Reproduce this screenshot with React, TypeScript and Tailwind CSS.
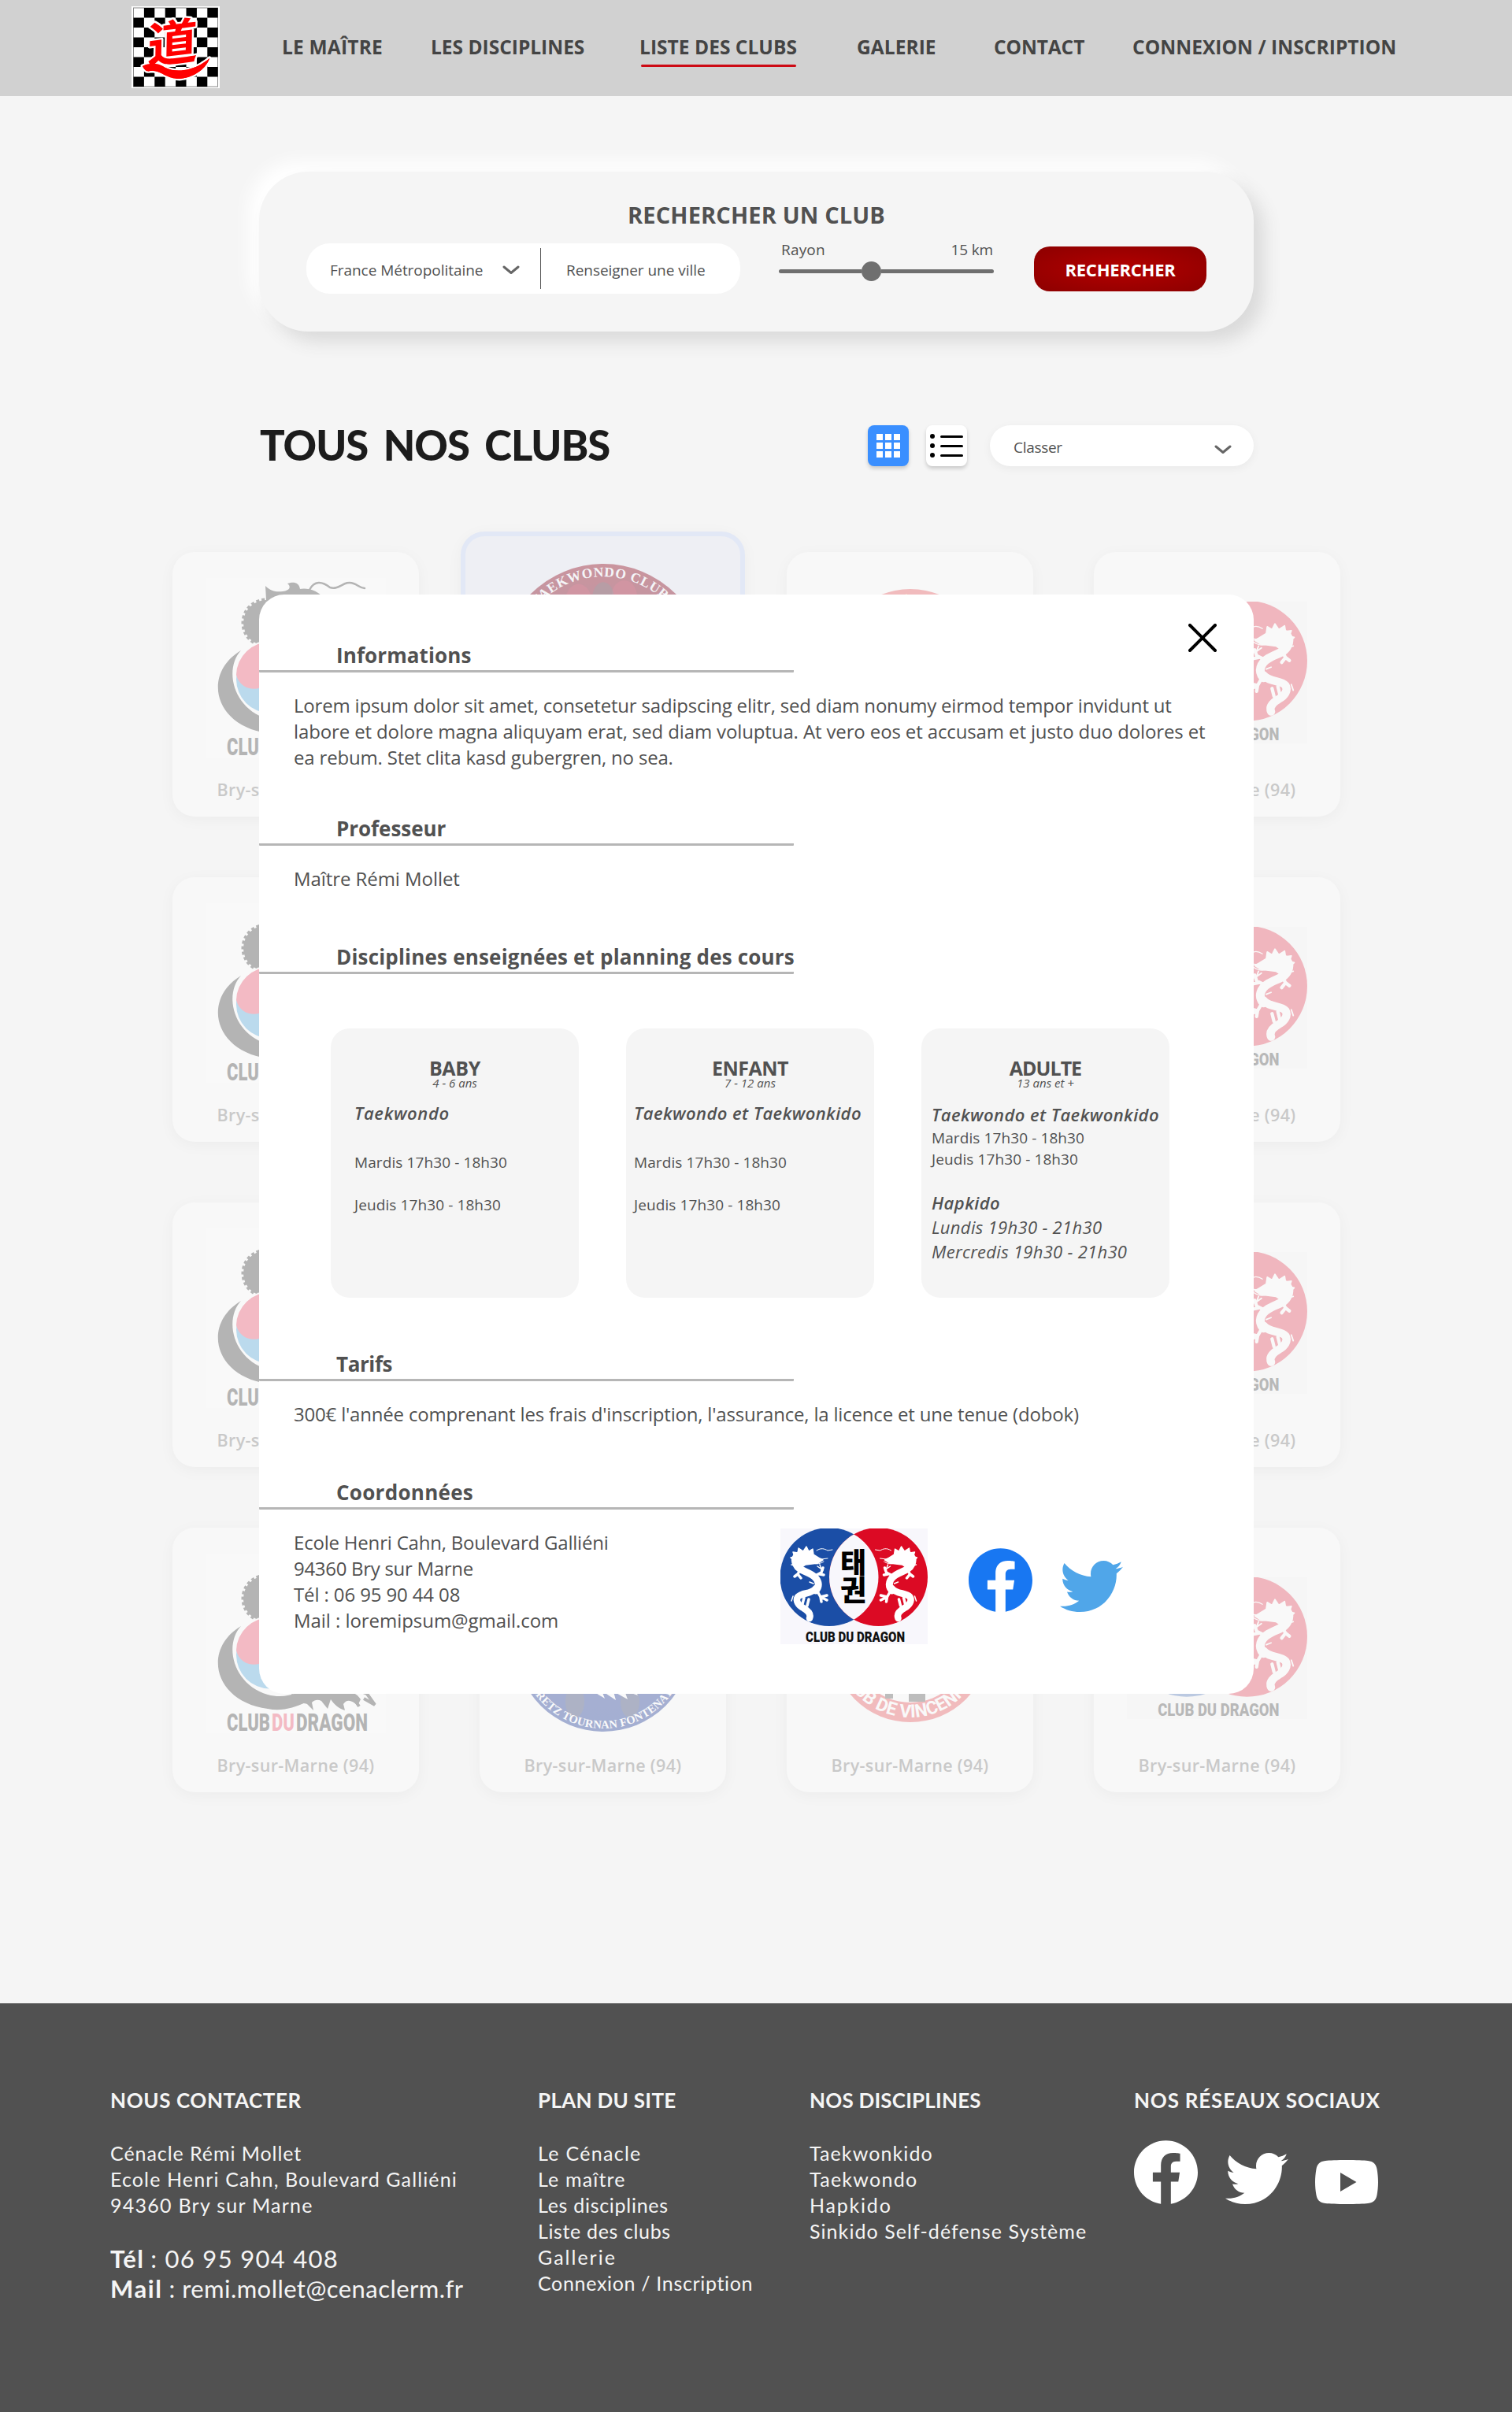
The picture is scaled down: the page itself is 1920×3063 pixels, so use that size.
import React from "react";

/* ---------- Icons ---------- */

const FacebookIcon = ({ className }: { className: string }) => (
  <svg viewBox="8 8 496 493" className={className} fill="currentColor">
    <path d="M504 256C504 119 393 8 256 8S8 119 8 256c0 123.78 90.69 226.38 209.25 245V327.69h-63V256h63v-54.64c0-62.15 37-96.48 93.67-96.48 27.14 0 55.52 4.84 55.52 4.84v61h-31.28c-30.8 0-40.41 19.12-40.41 38.73V256h68.78l-11 71.69h-57.78V501C413.31 478.38 504 379.78 504 256z" />
  </svg>
);

const TwitterIcon = ({ className }: { className: string }) => (
  <svg viewBox="0 48 512 416" className={className} fill="currentColor">
    <path d="M459.37 151.716c.325 4.548.325 9.097.325 13.645 0 138.72-105.583 298.558-298.558 298.558-59.452 0-114.68-17.219-161.137-47.106 8.447.974 16.568 1.299 25.34 1.299 49.055 0 94.213-16.568 130.274-44.832-46.132-.975-84.792-31.188-98.112-72.772 6.498.974 12.995 1.624 19.818 1.624 9.421 0 18.843-1.3 27.614-3.573-48.081-9.747-84.143-51.98-84.143-102.985v-1.299c13.969 7.797 30.214 12.67 47.431 13.319-28.264-18.843-46.781-51.005-46.781-87.391 0-19.492 5.197-37.36 14.294-52.954 51.655 63.675 129.3 105.258 216.365 109.807-1.624-7.797-2.599-15.918-2.599-24.04 0-57.828 46.782-104.934 104.934-104.934 30.213 0 57.502 12.67 76.67 33.137 23.715-4.548 46.456-13.32 66.599-25.34-7.798 24.366-24.366 44.833-46.132 57.827 21.117-2.273 41.584-8.122 60.426-16.243-14.292 20.791-32.161 39.308-52.628 54.253z" />
  </svg>
);

const YoutubeIcon = ({ className }: { className: string }) => (
  <svg viewBox="0 0 80 56" className={className} fill="currentColor">
    <path
      fillRule="evenodd"
      d="M40 0C52 0 62 .4 67 1 74 1.8 77.500 5 78.600 12 79.400 17 80 22 80 28s-.6 11-1.400 16C77.500 51 74 54.200 67 55c-5 .6-15 1-27 1s-22-.4-27-1C6 54.200 2.500 51 1.400 44 .6 39 0 34 0 28s.6-11 1.400-16C2.500 5 6 1.800 13 1 18 .4 28 0 40 0ZM32 16v24l20.500-12Z"
    />
  </svg>
);

const Chevron = () => (
  <svg viewBox="0 0 22 12" className="h-3 w-[22px]" fill="none" stroke="#666" strokeWidth="3" strokeLinecap="round" strokeLinejoin="round">
    <path d="M2 2l9 7.500L20 2" />
  </svg>
);

/* ---------- Logos ---------- */

const cells = Array.from({ length: 64 }, (_, i) => i).filter((i) => ((i % 8) + Math.floor(i / 8)) % 2 === 1);

const SiteLogo = () => (
  <svg viewBox="0 0 112 104" className="h-[104px] w-28">
    <rect width="112" height="104" fill="#fff" />
    <rect x="2" y="1.500" width="108" height="101" fill="#8a8a8a" />
    <rect x="3" y="2.500" width="106" height="99" fill="#fff" />
    {cells.map((i) => (
      <rect key={i} x={2.500 + (i % 8) * 13.400} y={2 + Math.floor(i / 8) * 12.500} width="13.400" height="12.500" />
    ))}
    <g stroke="#fff" strokeWidth="5" strokeLinejoin="round" paintOrder="stroke" fill="red">
      <path d="M14 76c10-5 20-4 29 2 14 7 38 4 56-12-4 13-20 25-38 26-16 0-22-9-33-10-5-1-9 4-14-6Z" />
      <text
        x="0"
        y="0"
        transform="translate(20 73) rotate(-7) skewX(-8) scale(1 .96)"
        fontFamily="'Noto Sans CJK JP', sans-serif"
        fontWeight="700"
        fontSize="64"
      >
        道
      </text>
    </g>
    <path d="M14 76c10-5 20-4 29 2 14 7 38 4 56-12-4 13-20 25-38 26-16 0-22-9-33-10-5-1-9 4-14-6Z" fill="red" />
  </svg>
);

const DragonShape = () => (
  <g fill="none" stroke="#fff" strokeLinecap="round" strokeLinejoin="round">
    <path strokeWidth="9" d="M30 34C20 32 16 38 20 46c3 7 12 8 20 13 8 5 11 13 5 20" />
    <path strokeWidth="8.500" d="M45 76c-6 8-18 5-23 11-3 5 1 11 7 14 7 4 10 8 8 13" />
    <path strokeWidth="4.500" d="M22 87c-3 8 6 14 12 18" />
    <path fill="#fff" strokeWidth="1.400" d="M16 40l-3-3 5-1-2-6 6 1 1-6 6 4 4-6 3 6 5-3 1 7 8 5 4 2-6 4-8 1-8 1-6 4-6 1Z" />
    <path strokeWidth="1" d="M46 28c6-4 10-2 14 0l6-1M44 40l16-2M40 43c6 4 12 1 15-1" />
    <path strokeWidth="3.500" d="M44 60l8-4 2-6M50 58l5 1M47 80l4 7 8-2M51 87l1 6M51 87l8 4M27 49l-5 9 4 5M22 58l-4 3M30 88l-2 8M36 90l-2 8" />
    <path strokeWidth="1.500" d="M16 86l-2 6M42 70l-5-2M14 46l4 1M47 48l7 5M50 46l3 8" />
  </g>
);

/* Two interlocked discs holding facing dragons, with the club name below */
const ClubDragonLogo = ({ className, id, backdrop }: { className: string; id: string; backdrop: string }) => (
  <svg viewBox="0 0 187 147" className={className}>
    <defs>
      <clipPath id={id}>
        <circle cx="62" cy="61.500" r="62.500" />
      </clipPath>
    </defs>
    <rect width="187" height="147" fill={backdrop} />
    <circle cx="62" cy="61.500" r="62.500" fill="#1b4ea6" />
    <circle cx="124.500" cy="61.500" r="62.500" fill="#dc0a24" />
    <circle cx="124.500" cy="61.500" r="62.500" fill="#f8f7fc" clipPath={`url(#${id})`} />
    <DragonShape />
    <g transform="translate(186.500 0) scale(-1 1)">
      <DragonShape />
    </g>
    <g fontFamily="'Noto Sans CJK KR', sans-serif" fontWeight="900" fontSize="36" textAnchor="middle">
      <text x="92.500" y="57">태</text>
      <text x="92.500" y="92">권</text>
    </g>
    <text
      x="32"
      y="143.500"
      fontFamily="Roboto, sans-serif"
      fontWeight="900"
      fontSize="18.500"
      textLength="126"
      lengthAdjust="spacingAndGlyphs"
      fill="#111"
    >
      CLUB DU DRAGON
    </text>
  </svg>
);

/* Dragon head over a taegeuk wrapped by a black crescent */
const ClubDuDragonLogo = () => (
  <svg viewBox="0 0 228 228" className="h-[228px] w-[228px] opacity-[0.27]">
    <rect width="228" height="228" fill="#fff" />
    <path d="M75 10l1 18 14 2 50-8c-6-6-12-8-21-8-1-7-6-9-12-8l-4 1c5 4 3 9-6 10-8 1-15 0-22-7Z" />
    <path d="M118 14c12-2 22 2 30 10l-40 8Z" />
    <path d="M131 15c6-12 16-11 26-3 12 4 18-10 30-5 6 2 8 6 14 6" fill="none" stroke="#000" strokeWidth="2.500" strokeLinecap="round" />
    <circle cx="76" cy="57" r="29" />
    <circle cx="76" cy="57" r="29.500" fill="none" stroke="#000" strokeWidth="4" strokeDasharray="4 3" />
    <circle cx="81" cy="128.500" r="49" fill="#fff" />
    <circle cx="81" cy="128.500" r="43" fill="#1b8bd0" />
    <path d="M38 123a43 43 0 0 1 86 2c-10-8-32-8-42 2-6 18-38 20-44-4Z" fill="#e8183c" />
    <path d="M44 92c-22 24-10 74 34 87 22 6 42-2 56-14 10 6 24 4 34-4l-6 14c14-4 28 0 34 10l-4 8c-8-8-14-8-18-2l2 8c-8-2-14-8-18-14l-4 12-8-10c-4-2-8-2-12 2l2 10-10-10c-14 6-30 12-48 8C10 188-6 122 44 92Z" />
    <path d="M108 180l16 3-6 4 12 2M168 178l14-2 12 18M184 170l20 8 10 14-14-8" fill="none" stroke="#000" strokeWidth="4" />
    <g fontFamily="Roboto, sans-serif" fontWeight="900" fontSize="31">
      <text x="26" y="225" textLength="55" lengthAdjust="spacingAndGlyphs">CLUB</text>
      <text x="83" y="225" textLength="29" lengthAdjust="spacingAndGlyphs" fill="#e8183c">DU</text>
      <text x="114" y="225" textLength="91" lengthAdjust="spacingAndGlyphs">DRAGON</text>
    </g>
  </svg>
);

/* Round red and blue badge with lettering on the rim */
const TournanLogo = ({ id, className }: { id: string; className: string }) => (
  <svg viewBox="0 0 224 224" className={className}>
    <defs>
      <linearGradient id={`${id}-fill`} x1="0" y1="0" x2="0" y2="1">
        <stop offset="0" stopColor="#961020" />
        <stop offset=".45" stopColor="#701030" />
        <stop offset=".55" stopColor="#102a90" />
        <stop offset="1" stopColor="#0a2a8c" />
      </linearGradient>
      <path id={`${id}-top`} d="M14 112a98 98 0 0 1 196 0" />
      <path id={`${id}-bottom`} d="M4 112a108 108 0 0 0 216 0" />
    </defs>
    <circle cx="112" cy="112" r="112" fill={`url(#${id}-fill)`} />
    <ellipse cx="85" cy="40" rx="14" ry="18" fill="#c01030" opacity=".5" />
    <ellipse cx="135" cy="36" rx="14" ry="18" fill="#c01030" opacity=".5" />
    <ellipse cx="112" cy="38" rx="12" ry="18" fill="#403840" opacity=".5" />
    <ellipse cx="76" cy="186" rx="12" ry="20" fill="#333a50" opacity=".6" />
    <ellipse cx="146" cy="186" rx="12" ry="20" fill="#333a50" opacity=".6" />
    <path d="M80 150c8 14 20 24 34 32l-4-10 18 12-3-11 18 10-4-11 17 6-6-11 14 2-10-20Z" fill="#fff" />
    <g fill="#fff" fontFamily="'Liberation Serif', serif" fontWeight="700" textAnchor="middle">
      <text fontSize="15" letterSpacing=".6">
        <textPath href={`#${id}-top`} startOffset="50%">TAEKWONDO CLUBS</textPath>
      </text>
      <text fontSize="14.500" letterSpacing=".2">
        <textPath href={`#${id}-bottom`} startOffset="49%">GRETZ TOURNAN FONTENAY</textPath>
      </text>
    </g>
  </svg>
);

const VincennesLogo = ({ id }: { id: string }) => (
  <svg viewBox="0 0 200 200" className="h-[200px] w-[200px] opacity-[0.27]">
    <defs>
      <path id={id} d="M6 100a94 94 0 0 0 188 0" />
    </defs>
    <circle cx="100" cy="100" r="100" fill="#e01a22" />
    <circle cx="100" cy="100" r="75" fill="#fff" />
    <path d="M68 100h10v70H68zM98 100h21v74H98z" fill="#222" />
    <path d="M92 9l3-3 4 5-6 4Z" fill="#f4d060" />
    <text fill="#fff" fontFamily="Roboto, sans-serif" fontWeight="700" fontSize="23" textAnchor="middle" textLength="218" lengthAdjust="spacingAndGlyphs">
      <textPath href={`#${id}`} startOffset="50%" textLength="218" lengthAdjust="spacingAndGlyphs">
        CLUB DE VINCENNES
      </textPath>
    </text>
  </svg>
);

/* ---------- Club grid ---------- */

const label = "text-center text-[21.5px] leading-[30px] font-semibold tracking-[0.35px] text-[#c9c9c9]";
const cardBase = "flex flex-col items-center rounded-[28px] bg-[#f8f8f8] shadow-[0_4px_20px_rgba(0,0,0,0.04)]";

const ClubCard = ({ children }: { children: React.ReactNode }) => (
  <div className={`${cardBase} h-[336px]`}>
    <div className="flex h-[287px] items-center pt-[7px]">{children}</div>
    <div className={label}>Bry-sur-Marne (94)</div>
  </div>
);

const SelectedClubCard = ({ children }: { children: React.ReactNode }) => (
  <div className="-mx-6 -my-[26px] flex flex-col items-center rounded-[30px] border-[6px] border-[#e2e8f6] bg-[#eeeff4] shadow-[0_4px_20px_rgba(0,0,0,0.04)]">
    <div className="flex h-[330px] items-center">{children}</div>
    <div className={label}>Bry-sur-Marne (94)</div>
  </div>
);

const ClubGrid = () => (
  <div className="mt-[106px] ml-[219px] grid grid-cols-[repeat(4,313px)] grid-rows-[repeat(4,336px)] gap-[77px]">
    {[0, 1, 2, 3].map((row) => (
      <React.Fragment key={row}>
        <ClubCard>
          <ClubDuDragonLogo />
        </ClubCard>
        {row === 0 ? (
          <SelectedClubCard>
            <TournanLogo id="tournan-selected" className="h-[260px] w-[260px] opacity-40" />
          </SelectedClubCard>
        ) : (
          <ClubCard>
            <TournanLogo id={`tournan-${row}`} className="h-56 w-56 opacity-35" />
          </ClubCard>
        )}
        <ClubCard>
          <VincennesLogo id={`vincennes-${row}`} />
        </ClubCard>
        <ClubCard>
          <ClubDragonLogo id={`dragon-${row}`} backdrop="#f4f4f4" className="mt-3 h-[180px] w-[229px] opacity-[0.27]" />
        </ClubCard>
      </React.Fragment>
    ))}
  </div>
);

/* ---------- Modal ---------- */

const SectionTitle = ({ children, className }: { children: React.ReactNode; className: string }) => (
  <div className="w-[679px] rounded-[1px] border-b-[3px] border-[#b6b6b6] pl-[98px]">
    <h3 className={`text-[26px] leading-[38px] font-bold whitespace-nowrap ${className}`}>{children}</h3>
  </div>
);

const body = "pl-11 text-[24px] leading-[33px] whitespace-nowrap";
const discipline = "text-[22px] leading-[30px] font-semibold italic whitespace-nowrap";
const slot = "text-[19px] leading-[28px] whitespace-nowrap tracking-[0.1px]";

const ScheduleCard = ({ title, ages, titleClass, pad, children }: { title: string; ages: string; titleClass: string; pad: string; children: React.ReactNode }) => (
  <div className="h-[342px] w-[315px] rounded-3xl bg-[#f5f5f5] pt-[34px]">
    <div className={`text-center text-[25px] leading-8 font-bold ${titleClass}`}>{title}</div>
    <div className="-mt-[5px] text-center text-[15px] leading-4 italic">{ages}</div>
    <div className={pad}>{children}</div>
  </div>
);

const Modal = () => (
  <div className="absolute top-[755px] left-[329px] h-[1396px] w-[1263px] rounded-[32px] bg-white pt-[58px] text-[#515151]">
    <svg viewBox="0 0 36 36" className="absolute top-[37px] right-[47px] h-9 w-9" stroke="#000" strokeWidth="4" strokeLinecap="round">
      <path d="M2 2l32 32M34 2L2 34" />
    </svg>

    <SectionTitle className="tracking-[0.1px]">Informations</SectionTitle>
    <div className={`mt-[25px] ${body}`}>
      <p className="tracking-[-0.19px]">Lorem ipsum dolor sit amet, consetetur sadipscing elitr, sed diam nonumy eirmod tempor invidunt ut</p>
      <p className="tracking-[-0.125px]">labore et dolore magna aliquyam erat, sed diam voluptua. At vero eos et accusam et justo duo dolores et</p>
      <p className="tracking-[-0.18px]">ea rebum. Stet clita kasd gubergren, no sea.</p>
    </div>

    <div className="h-[55px]" />
    <SectionTitle className="tracking-[-0.05px]">Professeur</SectionTitle>
    <p className={`mt-[25px] tracking-[-0.07px] ${body}`}>Maître Rémi Mollet</p>

    <div className="h-16" />
    <SectionTitle className="tracking-[0.19px]">Disciplines enseignées et planning des cours</SectionTitle>
    <div className="mt-[69px] ml-[91px] flex gap-[60px]">
      <ScheduleCard title="BABY" ages="4 - 6 ans" titleClass="tracking-[-0.3px]" pad="pl-[30px]">
        <p className={`mt-[15px] tracking-[0.64px] ${discipline}`}>Taekwondo</p>
        <p className={`mt-[34px] ${slot}`}>Mardis 17h30 - 18h30</p>
        <p className={`mt-[26px] ${slot}`}>Jeudis 17h30 - 18h30</p>
      </ScheduleCard>
      <ScheduleCard title="ENFANT" ages="7 - 12 ans" titleClass="tracking-[-0.5px]" pad="pl-[10px]">
        <p className={`mt-[15px] tracking-[0.42px] ${discipline}`}>Taekwondo et Taekwonkido</p>
        <p className={`mt-[34px] ${slot}`}>Mardis 17h30 - 18h30</p>
        <p className={`mt-[26px] ${slot}`}>Jeudis 17h30 - 18h30</p>
      </ScheduleCard>
      <ScheduleCard title="ADULTE" ages="13 ans et +" titleClass="tracking-[-1px]" pad="pl-[13px]">
        <p className={`mt-[17px] tracking-[0.42px] ${discipline}`}>Taekwondo et Taekwonkido</p>
        <p className={`mt-px ${slot}`}>Mardis 17h30 - 18h30</p>
        <p className={`-mt-px ${slot}`}>Jeudis 17h30 - 18h30</p>
        <p className={`mt-[26px] tracking-[0.43px] ${discipline}`}>Hapkido</p>
        <p className="mt-px text-[22px] leading-[31px] tracking-[0.32px] whitespace-nowrap italic">Lundis 19h30 - 21h30</p>
        <p className="text-[22px] leading-[31px] tracking-[0.28px] whitespace-nowrap italic">Mercredis 19h30 - 21h30</p>
      </ScheduleCard>
    </div>

    <div className="h-[65px]" />
    <SectionTitle className="tracking-[-0.4px]">Tarifs</SectionTitle>
    <p className={`mt-[25px] tracking-[-0.19px] ${body}`}>
      300€ l'année comprenant les frais d'inscription, l'assurance, la licence et une tenue (dobok)
    </p>

    <div className="h-16" />
    <SectionTitle className="tracking-[0.28px]">Coordonnées</SectionTitle>
    <div className="mt-[25px] flex h-[132px] items-start">
      <div className={`w-[662px] ${body}`}>
        <p className="tracking-[-0.2px]">Ecole Henri Cahn, Boulevard Galliéni</p>
        <p className="tracking-[-0.3px]">94360 Bry sur Marne</p>
        <p className="tracking-[-0.12px]">Tél : 06 95 90 44 08</p>
        <p className="tracking-[-0.05px]">Mail : loremipsum@gmail.com</p>
      </div>
      <ClubDragonLogo id="dragon-contact" backdrop="#f8f7fc" className="-mt-px h-[147px] w-[187px] shrink-0" />
      <FacebookIcon className="mt-6 ml-[52px] h-[81px] w-[81px] shrink-0 text-[#1877f2]" />
      <TwitterIcon className="mt-10 ml-[35px] h-[65px] w-20 shrink-0 text-[#50a6e9]" />
    </div>
  </div>
);

/* ---------- Page ---------- */

const Header = () => (
  <header className="flex h-[122px] items-start bg-[#d1d1d1] pt-2 pl-[167px]">
    <SiteLogo />
    <nav className="mt-8 ml-[79px] flex text-[24.5px] leading-10 font-bold whitespace-nowrap text-[#444]">
      <a className="w-[189px] tracking-[0.2px]">LE MAÎTRE</a>
      <a className="w-[265px]">LES DISCIPLINES</a>
      <a className="w-[276px] tracking-[0.04px]">
        LISTE DES CLUBS
        <span className="mt-[2px] ml-[2px] block h-[3px] w-[197px] rounded-full bg-[#cd0a14]" />
      </a>
      <a className="w-[174px] tracking-[0.05px]">GALERIE</a>
      <a className="w-[176px] tracking-[-0.1px]">CONTACT</a>
      <a className="tracking-[0.06px]">CONNEXION / INSCRIPTION</a>
    </nav>
  </header>
);

const SearchPanel = () => (
  <section className="mt-24 ml-[329px] h-[203px] w-[1263px] rounded-[62px] bg-[#f5f5f5] pt-[35px] text-[#515151] shadow-[13px_13px_22px_#dadada,-13px_-13px_22px_#ffffff]">
    <h2 className="text-center text-[29px] leading-10 font-bold tracking-[0.15px]">RECHERCHER UN CLUB</h2>
    <div className="mt-4 flex items-start pl-[60px] text-[19px]">
      <div className="flex h-16 w-[551px] items-center rounded-[30px] bg-white pl-[30px]">
        <span className="w-[219px] pt-[5px] tracking-[-0.04px]">France Métropolitaine</span>
        <span className="pt-1">
          <Chevron />
        </span>
        <span className="ml-[26px] h-[52px] w-px bg-[#555]" />
        <span className="pt-[5px] pl-8 tracking-[-0.04px]">Renseigner une ville</span>
      </div>
      <div className="-mt-1 ml-[49px] w-[273px]">
        <div className="flex justify-between pr-px pl-[3px] leading-6">
          <span className="tracking-[0.19px]">Rayon</span>
          <span className="tracking-[-0.16px]">15 km</span>
        </div>
        <div className="mt-[3px] flex h-[25px] items-center">
          <span className="h-[5px] w-[105px] rounded-l-sm bg-[#6f6f6f]" />
          <span className="h-[25px] w-[25px] rounded-full bg-[#6f6f6f]" />
          <span className="h-[5px] flex-1 rounded-r-sm bg-[#6f6f6f]" />
        </div>
      </div>
      <button className="mt-1 ml-[51px] h-[57px] w-[219px] rounded-[20px] bg-[radial-gradient(ellipse,#b40000_0%,#8c0000_100%)] pt-px text-[22px] font-bold tracking-[-0.2px] text-white">
        RECHERCHER
      </button>
    </div>
  </section>
);

const Toolbar = () => (
  <div className="mt-[110px] ml-[329px] flex h-16 w-[1263px] pl-px">
    <h1 className="w-[772px] pt-[2px] font-['Lato',sans-serif] text-[52.5px] leading-[64px] font-black tracking-[-1px] text-[#1c1c1c] [word-spacing:8px]">TOUS NOS CLUBS</h1>
    <div className="mt-[9px] flex h-[52px]">
      <div className="grid h-[52px] w-[52px] grid-cols-[repeat(3,8px)] place-content-center gap-[3px] rounded-lg bg-[#3a8fff] shadow-[0_3px_5px_rgba(0,0,0,0.18)]">
        {Array.from({ length: 9 }, (_, i) => (
          <span key={i} className="h-2 w-2 bg-white" />
        ))}
      </div>
      <div className="ml-[22px] flex h-[52px] w-[52px] flex-col items-center justify-center gap-[6px] rounded-lg bg-white shadow-[0_3px_5px_rgba(0,0,0,0.18)]">
        {[0, 1, 2].map((i) => (
          <span key={i} className="flex items-center gap-[7px]">
            <span className="h-[6px] w-[6px] rounded-full bg-black" />
            <span className="h-[3px] w-[29px] rounded-full bg-black" />
          </span>
        ))}
      </div>
      <div className="ml-[29px] flex h-[52px] w-[335px] items-center justify-between rounded-[26px] bg-white pr-[28px] pl-[30px] text-[19px] text-[#515151] shadow-[0_3px_12px_rgba(0,0,0,0.05)]">
        <span className="pt-[5px] tracking-[-0.3px]">Classer</span>
        <span className="pt-[10px]">
          <Chevron />
        </span>
      </div>
    </div>
  </div>
);

const footerTitle = "text-[26px] leading-10 font-bold";

const Footer = () => (
  <footer className="mt-[268px] flex h-[519px] bg-[#515151] pt-[103px] pl-[140px] font-['Lato',sans-serif] text-[25px] leading-[33px] whitespace-nowrap text-[#f5f5f5]">
    <div className="w-[543px]">
      <h4 className={`tracking-[0.6px] ${footerTitle}`}>NOUS CONTACTER</h4>
      <div className="mt-[31px]">
        <p className="tracking-[0.94px]">Cénacle Rémi Mollet</p>
        <p className="tracking-[1.13px]">Ecole Henri Cahn, Boulevard Galliéni</p>
        <p className="tracking-[1.26px]">94360 Bry sur Marne</p>
      </div>
      <div className="mt-8 text-[31px] leading-[38px]">
        <p>
          <b className="tracking-[1.4px]">Tél</b> <span className="tracking-[1.3px]">: 06 95 904 408</span>
        </p>
        <p>
          <b className="tracking-[1.6px]">Mail</b> <span className="tracking-[0.45px]">: remi.mollet@cenaclerm.fr</span>
        </p>
      </div>
    </div>
    <div className="w-[345px]">
      <h4 className={`tracking-[0.3px] ${footerTitle}`}>PLAN DU SITE</h4>
      <div className="mt-[31px]">
        <p className="tracking-[1.3px]">Le Cénacle</p>
        <p className="tracking-[1.15px]">Le maître</p>
        <p className="tracking-[0.72px]">Les disciplines</p>
        <p className="tracking-[0.64px]">Liste des clubs</p>
        <p className="tracking-[2px]">Gallerie</p>
        <p className="tracking-[0.67px]">Connexion / Inscription</p>
      </div>
    </div>
    <div className="w-[412px]">
      <h4 className={`tracking-[0.2px] ${footerTitle}`}>NOS DISCIPLINES</h4>
      <div className="mt-[31px]">
        <p className="tracking-[1.1px]">Taekwonkido</p>
        <p className="tracking-[1.27px]">Taekwondo</p>
        <p className="tracking-[1.8px]">Hapkido</p>
        <p className="tracking-[1.07px]">Sinkido Self-défense Système</p>
      </div>
    </div>
    <div>
      <h4 className={`tracking-[0.8px] ${footerTitle}`}>NOS RÉSEAUX SOCIAUX</h4>
      <div className="mt-[31px] flex items-end text-white">
        <FacebookIcon className="h-[81px] w-[81px]" />
        <TwitterIcon className="ml-[35px] h-[65px] w-20" />
        <YoutubeIcon className="ml-[34px] h-14 w-20" />
      </div>
    </div>
  </footer>
);

export default function App() {
  return (
    <div className="relative h-[3063px] w-[1920px] overflow-hidden bg-[#f5f5f5] font-['Open_Sans',sans-serif]">
      <Header />
      <main>
        <SearchPanel />
        <Toolbar />
        <ClubGrid />
      </main>
      <Footer />
      <Modal />
    </div>
  );
}
